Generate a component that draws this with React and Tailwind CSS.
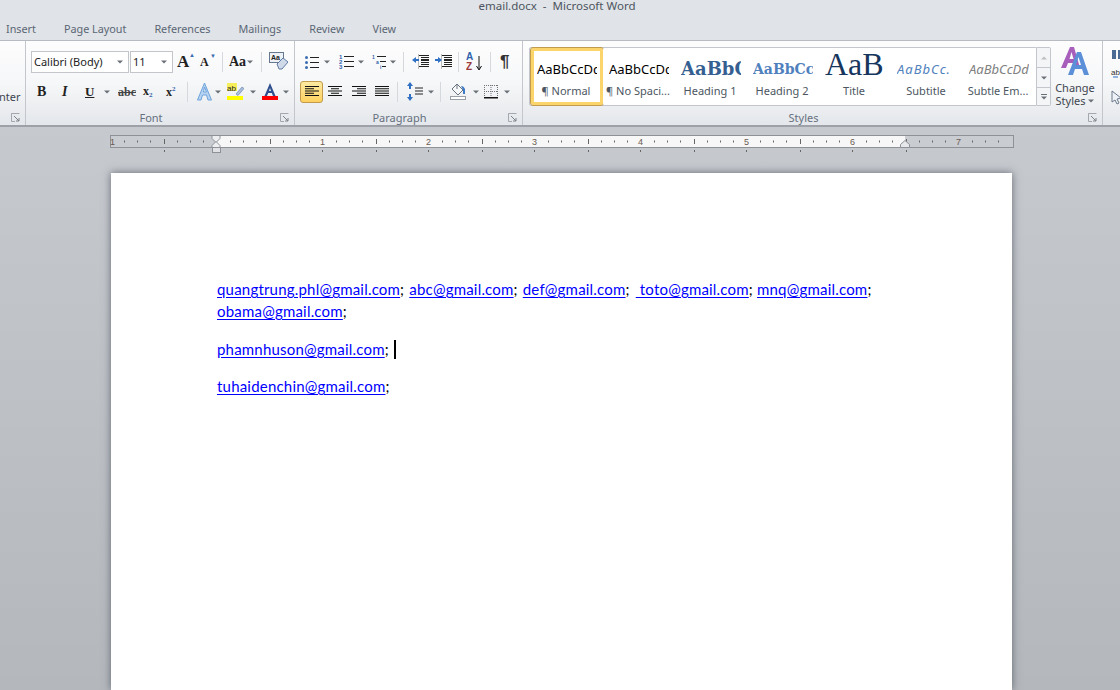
import React from "react";

const tabs = ["Insert", "Page Layout", "References", "Mailings", "Review", "View"];

const Caret = ({ className = "" }) => (
  <svg width="6" height="4" viewBox="0 0 6 4" className={`shrink-0 ${className}`}>
    <path d="M0 0.5h6L3 3.5z" fill="#6b7078" />
  </svg>
);

const Sep = ({ className = "" }) => <div className={`w-px h-[20px] bg-[#d5d8dc] shrink-0 ${className}`} />;

const Launcher = () => (
  <svg width="9" height="9" viewBox="0 0 9 9" className="absolute right-[5px] bottom-[3px]">
    <path d="M0.5 4V0.5H8.5M0.5 0.5V8.5H4" fill="none" stroke="#a3a8ae" />
    <path d="M3 3L8 8M8 5V8H5" fill="none" stroke="#7d8289" />
  </svg>
);

const Group = ({ label, width, children }) => (
  <div className={`relative h-full flex flex-col shrink-0 border-r border-[#c3c7cd] ${width}`}>
    <div className="h-[69px]">{children}</div>
    <div className="h-[15px] pr-[18px] text-center text-[11px] leading-[15px] text-[#66707e]">{label}</div>
    <Launcher />
  </div>
);

const Lines = ({ w = 14, rows = [[0, 14], [0, 9], [0, 14], [0, 9], [0, 14]] }) => (
  <svg width={w} height="11" viewBox={`0 0 ${w} 11`} className="shrink-0">
    {rows.map((r, i) => (
      <rect key={i} x={r[0]} y={i * 2.25} width={r[1]} height="1" fill="#111" />
    ))}
  </svg>
);

const Bullets = () => (
  <svg width="14" height="14" viewBox="0 0 14 14">
    {[1, 6, 11].map((y) => (
      <g key={y}>
        <rect x="0" y={y} width="3" height="3" rx="1.5" fill="#3a6cb0" />
        <rect x="5" y={y + 1} width="9" height="1" fill="#222" />
      </g>
    ))}
  </svg>
);

const Numbers = () => (
  <svg width="15" height="15" viewBox="0 0 15 15">
    {[0, 1, 2].map((i) => (
      <g key={i}>
        <text x="0" y={5 + i * 5} fontSize="6" fontWeight="700" fill="#2f62ad" fontFamily="Liberation Sans">{i + 1}</text>
        <rect x="5" y={2 + i * 5} width="10" height="1" fill="#222" />
      </g>
    ))}
  </svg>
);

const Multi = () => (
  <svg width="14" height="16" viewBox="0 0 14 16">
    <text x="0" y="5" fontSize="5" fontWeight="700" fill="#2f62ad" fontFamily="Liberation Sans">1</text>
    <rect x="5" y="2" width="9" height="1" fill="#222" />
    <text x="4" y="10" fontSize="5" fontWeight="700" fill="#2f62ad" fontFamily="Liberation Sans">a</text>
    <rect x="8" y="7" width="6" height="1" fill="#222" />
    <text x="8" y="15" fontSize="5" fontWeight="700" fill="#2f62ad" fontFamily="Liberation Sans">i</text>
    <rect x="10" y="12" width="4" height="1" fill="#222" />
  </svg>
);

const Indent = ({ flip }) => (
  <svg width="17" height="15" viewBox="0 0 17 15">
    <rect x="6" y="1" width="11" height="1" fill="#222" />
    <rect x="9" y="3" width="8" height="1" fill="#222" />
    <rect x="9" y="5" width="8" height="2" fill="#222" />
    <rect x="9" y="8" width="8" height="1" fill="#222" />
    <rect x="9" y="10" width="8" height="1" fill="#222" />
    <rect x="6" y="12" width="11" height="1" fill="#222" />
    <rect x="6" y="0" width="1" height="15" fill="#bbb" />
    {flip ? (
      <path d="M0 5h3V3l4 3-4 3V7H0z" fill="#2f6fc4" />
    ) : (
      <path d="M7 5H4V3L0 6l4 3V7h3z" fill="#2f6fc4" />
    )}
  </svg>
);

const Sort = () => (
  <svg width="17" height="21" viewBox="0 0 17 21">
    <text x="0" y="9" fontSize="10" fontWeight="700" fill="#2f62ad" fontFamily="Liberation Sans">A</text>
    <text x="0" y="19" fontSize="10" fontWeight="700" fill="#9c3b3b" fontFamily="Liberation Sans">Z</text>
    <path d="M13 5v13M10.5 15l2.5 4 2.5-4" fill="none" stroke="#111" />
  </svg>
);

const Shading = () => (
  <svg width="17" height="17" viewBox="0 0 17 17">
    <path d="M7 1l6 6-5 5-6-6z" fill="#f7f8fa" stroke="#6a7380" />
    <path d="M7 1v5" stroke="#6a7380" />
    <path d="M11 3c2 0 3 1 4 3v5h-2V7z" fill="#3f7cc6" />
    <rect x="0.5" y="13.5" width="15" height="3" fill="#fff" stroke="#9aa0a8" />
  </svg>
);

const BordersIcon = () => (
  <svg width="14" height="15" viewBox="0 0 14 15">
    <path d="M0.5 1v12M7 1v12M13.5 1v12M0 1.5h14M0 7.5h14" fill="none" stroke="#6f747b" strokeDasharray="1 1" />
    <rect x="0" y="13" width="14" height="1.5" fill="#111" />
  </svg>
);

const LineSpacing = () => (
  <svg width="16" height="19" viewBox="0 0 16 19">
    <path d="M3 0l3 4H4v3H2V4H0zM3 19l3-4H4v-3H2v3H0z" fill="#2f6fc4" />
    <path d="M8 6h8M8 9h8M8 12h8" stroke="#222" />
  </svg>
);

const ClearIcon = () => (
  <svg width="19" height="19" viewBox="0 0 19 19">
    <rect x="0.5" y="0.5" width="14" height="10" fill="#eef2f7" stroke="#66788f" />
    <text x="2" y="8" fontSize="7" fontWeight="700" fill="#222" fontFamily="Liberation Sans">Aa</text>
    <path d="M8 12l6-6 5 4-6 7H10z" fill="#cfd9e8" stroke="#5f7ba3" />
  </svg>
);

const GlowA = () => (
  <svg width="17" height="19" viewBox="0 0 17 19">
    <path d="M8.5 1L15.5 18H12L10.5 13H6.5L5 18H1.5zM7.5 10h3L8.5 5z" fill="#b6d4f2" stroke="#6ea4dc" strokeWidth="1" />
  </svg>
);

const Highlight = () => (
  <svg width="17" height="17" viewBox="0 0 17 17">
    <rect x="0" y="0" width="10" height="8" fill="#f6ee5a" />
    <text x="0" y="8" fontSize="8" fill="#222" fontFamily="Liberation Sans">ab</text>
    <path d="M9 11l6-7 2 1.5-6 7z" fill="#a9bfdc" stroke="#5f7ba3" strokeWidth="0.6" />
    <rect x="0" y="13" width="16" height="4" fill="#ffff00" />
  </svg>
);

const FontColor = () => (
  <svg width="16" height="17" viewBox="0 0 16 17">
    <path d="M8 0L13.5 13H11L9.8 10H6.2L5 13H2.5zM7 8h2L8 5z" fill="#2f4f8f" />
    <rect x="0" y="13" width="16" height="4" fill="#ff0000" />
  </svg>
);

const SmallBtn = ({ className = "", children }) => (
  <div className={`flex items-center shrink-0 ${className}`}>{children}</div>
);

const sampleBase = "h-[32px] pt-[4px] w-[60px] overflow-hidden whitespace-nowrap flex items-center leading-none";

const styles = [
  { name: "¶ Normal", text: "AaBbCcDd", cls: "font-['Noto_Sans'] text-[13px] text-black" },
  { name: "¶ No Spaci...", text: "AaBbCcDd", cls: "font-['Noto_Sans'] text-[13px] text-black" },
  { name: "Heading 1", text: "AaBbCc", cls: "font-['DejaVu_Serif'] font-bold text-[18px] text-[#365f91]" },
  { name: "Heading 2", text: "AaBbCc", cls: "font-['DejaVu_Serif'] font-bold text-[14px] text-[#4f81bd]" },
  { name: "Title", text: "AaB", cls: "font-['Liberation_Serif'] text-[32px] pb-[10px] text-[#17365d]" },
  { name: "Subtitle", text: "AaBbCc.", cls: "font-['Noto_Sans'] italic text-[13px] tracking-[1px] text-[#4f81bd]" },
  { name: "Subtle Em...", text: "AaBbCcDd", cls: "font-['Noto_Sans'] italic text-[13px] text-[#808080]" },
];

const StyleItem = ({ s, active }) => (
  <div
    className={`w-[72px] h-[57px] shrink-0 flex flex-col items-center rounded-[2px] ${
      active ? "border-[3px] border-[#fbd56c] outline outline-1 outline-[#c29b4c] bg-white" : "border-[3px] border-white"
    }`}
  >
    <div className={`${sampleBase} ${s.cls}`}>{s.text}</div>
    <div className="pr-[2px] text-[11px] leading-[16px] text-[#4c5662] whitespace-nowrap">{s.name}</div>
  </div>
);

const Ruler = () => {
  const ticks = [];
  for (let i = -8; i <= 60; i++) {
    const x = 216.5 + i * 13.25 - 110;
    if (x < 4 || x > 900) continue;
    const m = ((i % 8) + 8) % 8;
    if (m === 0) continue;
    ticks.push(<rect key={i} x={Math.round(x)} y={m === 4 ? 4 : 5.5} width="1" height={m === 4 ? 5 : 2} fill="#666" />);
    if (m === 4) ticks.push(<rect key={"b" + i} x={Math.round(x)} y="15" width="1" height="2" fill="#666" />);
  }
  return (
    <svg width="905" height="20" viewBox="0 0 905 20" className="block">
      <rect x="0.5" y="0.5" width="903" height="12" fill="#c9ccd1" stroke="#8e9298" />
      <rect x="106" y="1" width="689" height="11" fill="#f7f7f7" />
      {ticks}
      {[1, 2, 3, 4, 5, 6, 7].map((n) => (
        <g key={n}>
          <text x={106.5 + n * 106} y="10" textAnchor="middle" fontSize="9" fill="#6a5a50" fontFamily="Liberation Sans">{n}</text>
          {n < 7 && <rect x={106 + n * 106} y="15" width="1" height="2" fill="#666" />}
        </g>
      ))}
      <text x="0" y="10" fontSize="9" fill="#6a5a50" fontFamily="Liberation Sans">1</text>
      <path d="M102 0.5h8v3l-4 4-4-4z" fill="#eceef0" stroke="#8e9298" />
      <path d="M102 12.5v-2l4-4 4 4v2z" fill="#eceef0" stroke="#8e9298" />
      <rect x="102.5" y="12.5" width="8" height="5" fill="#dfe1e4" stroke="#8e9298" />
      <path d="M790.5 12.5v-3l4.5-4 4.5 4v3z" fill="#e6e8eb" stroke="#8e9298" />
    </svg>
  );
};

const Mail = ({ className = "", children }) => (
  <a className={`text-[#0000ff] underline decoration-[#0000ff] underline-offset-[2px] ${className}`}>{children}</a>
);

export default function App() {
  return (
    <div className="w-[1120px] h-[690px] overflow-hidden flex flex-col font-['Noto_Sans'] bg-gradient-to-b from-[#cacdd2] to-[#b4b8bd]">
      {/* title bar + tabs */}
      <div className="h-[41px] shrink-0 flex flex-col bg-[#e0e3e7] border-b border-[#b8bcc2]">
        <div className="h-[22px] -mt-[2px] pr-[6px] text-center text-[11.5px] leading-[16px] text-[#4d5560] whitespace-pre">email.docx  -  Microsoft Word</div>
        <div className="flex gap-[28px] pl-[6px] pt-[1px] text-[10.8px] leading-[16px] text-[#5a6675]">
          {tabs.map((t) => (
            <span key={t}>{t}</span>
          ))}
        </div>
      </div>

      {/* ribbon */}
      <div className="h-[86px] shrink-0 flex bg-gradient-to-b from-[#fdfdfe] via-[#f6f7f8] to-[#e4e7eb] border-b-2 border-[#9ea2a8]">
        <Group width="w-[26px]" label="">
          <div className="h-full pt-[48px] text-[11px] leading-[16px] text-[#3f4650] overflow-hidden whitespace-nowrap -ml-px">nter</div>
        </Group>

        <Group width="w-[269px]" label="Font">
          <div className="pl-[5px] pt-[10px] flex items-center h-[31px]">
            <div className="w-[98px] h-[22px] border border-[#c2c6cb] bg-white flex items-center justify-between pl-[2px] pr-[5px] pt-px text-[11px] text-[#222]">
              Calibri (Body) <Caret />
            </div>
            <div className="w-[43px] h-[22px] ml-px border border-[#c2c6cb] bg-white flex items-center justify-between pl-[2px] pr-[5px] pt-px text-[11px] text-[#222]">
              11 <Caret />
            </div>
            <div className="ml-[4px] w-[18px] text-[17px] font-bold font-['Liberation_Serif'] text-[#222] relative leading-none">A<span className="absolute -top-[1px] right-0 text-[6px] text-[#3a6cb0]">▲</span></div>
            <div className="ml-[5px] w-[16px] text-[12px] font-bold font-['Liberation_Serif'] text-[#222] relative leading-none">A<span className="absolute -top-[3px] right-0 text-[6px] text-[#3a6cb0]">▼</span></div>
            <Sep className="ml-[6px]" />
            <div className="ml-[6px] w-[17px] text-[14px] font-bold font-['Liberation_Serif'] text-[#222] leading-none">Aa</div>
            <Caret className="ml-[1px]" />
            <Sep className="ml-[8px]" />
            <div className="ml-[7px]"><ClearIcon /></div>
          </div>
          <div className="pl-[11px] pt-[9px] flex items-center h-[30px] font-['Liberation_Serif'] text-[#222]">
            <div className="w-[12px] text-[14px] font-bold">B</div>
            <div className="ml-[12px] w-[11px] text-[14px] italic font-bold pl-px">I</div>
            <div className="ml-[13px] w-[12px] text-[13px] font-bold underline">U</div>
            <Caret className="ml-[7px]" />
            <div className="ml-[8px] w-[18px] text-[12px] font-bold line-through text-[#444]">abc</div>
            <div className="ml-[7px] w-[15px] text-[12px] font-bold">x<span className="text-[7px] text-[#2f62ad] align-[-2px]">2</span></div>
            <div className="ml-[8px] w-[15px] text-[12px] font-bold">x<span className="text-[7px] text-[#2f62ad] align-[5px]">2</span></div>
            <Sep className="ml-[6px]" />
            <div className="ml-[8px]"><GlowA /></div>
            <Caret className="ml-[2px]" />
            <div className="ml-[6px]"><Highlight /></div>
            <Caret className="ml-[6px]" />
            <div className="ml-[6px]"><FontColor /></div>
            <Caret className="ml-[5px]" />
          </div>
        </Group>

        <Group width="w-[228px]" label="Paragraph">
          <div className="pl-[10px] pt-[10px] flex items-center h-[31px]">
            <Bullets /><Caret className="ml-[5px]" />
            <div className="ml-[9px]"><Numbers /></div><Caret className="ml-[4px]" />
            <div className="ml-[8px]"><Multi /></div><Caret className="ml-[4px]" />
            <Sep className="ml-[7px]" />
            <div className="ml-[8px]"><Indent /></div>
            <div className="ml-[6px]"><Indent flip /></div>
            <Sep className="ml-[6px]" />
            <div className="ml-[7px]"><Sort /></div>
            <Sep className="ml-[7px]" />
            <div className="ml-[9px] w-[14px] text-[17px] font-bold font-['Liberation_Sans'] text-[#333] leading-none">¶</div>
          </div>
          <div className="pl-[5px] pt-[8px] flex items-center h-[31px]">
            <div className="w-[23px] h-[22px] rounded-[3px] border border-[#c29b4c] bg-gradient-to-b from-[#fde9a0] to-[#fdd15f] flex items-center justify-center">
              <Lines rows={[[0, 14], [0, 9], [0, 14], [0, 9], [0, 14]]} />
            </div>
            <SmallBtn className="ml-[5px]"><Lines rows={[[0, 14], [3, 8], [0, 14], [3, 8], [0, 14]]} /></SmallBtn>
            <SmallBtn className="ml-[10px]"><Lines rows={[[0, 14], [5, 9], [0, 14], [5, 9], [0, 14]]} /></SmallBtn>
            <SmallBtn className="ml-[9px]"><Lines rows={[[0, 14], [0, 14], [0, 14], [0, 14], [0, 14]]} /></SmallBtn>
            <Sep className="ml-[8px]" />
            <div className="ml-[9px]"><LineSpacing /></div><Caret className="ml-[5px]" />
            <Sep className="ml-[6px]" />
            <div className="ml-[9px]"><Shading /></div><Caret className="ml-[6px]" />
            <div className="ml-[5px]"><BordersIcon /></div><Caret className="ml-[6px]" />
          </div>
        </Group>

        <Group width="w-[580px]" label="Styles">
          <div className="pl-[6px] pt-[6px] flex items-start">
            <div className="flex w-[508px] h-[59px] bg-white border border-[#c3c7cd] rounded-l-[2px] pl-px">
              {styles.map((s, i) => (
                <StyleItem key={s.name} s={s} active={i === 0} />
              ))}
            </div>
            <div className="w-[14px] h-[59px] flex flex-col border border-l-0 border-[#c3c7cd] rounded-r-[2px] bg-[#f4f5f7]">
              <div className="h-[20px] flex items-center justify-center border-b border-[#c3c7cd]"><Caret className="rotate-180 opacity-40" /></div>
              <div className="h-[20px] flex items-center justify-center border-b border-[#c3c7cd]"><Caret /></div>
              <div className="flex-1 flex flex-col gap-px items-center justify-center"><div className="w-[6px] h-px bg-[#6b7078]" /><Caret /></div>
            </div>
            <div className="w-[50px] pr-[2px] flex flex-col items-center text-[11px] leading-[13px] text-[#3f4650]">
              <svg width="32" height="30" viewBox="0 0 32 30" className="mt-[-1px] mb-[5px]">
                <path d="M11 1h4l6 21h-4l-1-5H9l-2 5H2z M10.5 13h4L12.5 6z" fill="#a85fbc" />
                <path d="M18 6h4l8 23h-5l-2-6h-7l-2 6H9z M17 19h5l-2.5-8z" fill="#5b8fd8" />
              </svg>
              <span>Change</span>
              <span className="flex items-center gap-[3px]">Styles <Caret /></span>
            </div>
          </div>
        </Group>

        <div className="w-[17px] ml-[7px] pt-[6px] flex flex-col gap-[5px] overflow-hidden shrink-0">
          <svg width="17" height="60" viewBox="0 0 17 60">
            <path d="M2 3h4v9H2zM8 3h4v9H8z" fill="#4b6a94" />
            <text x="1" y="28" fontSize="8" fill="#333" fontFamily="Liberation Sans">ab</text>
            <path d="M3 30h5" stroke="#2f6fc4" />
            <path d="M2 44l9 7-4 1 2 4-2 1-2-4-3 2z" fill="#eef2f7" stroke="#6c7a8d" />
          </svg>
        </div>
      </div>

      {/* ruler */}
      <div className="h-[46px] shrink-0 pl-[110px] pt-[8px]">
        <Ruler />
      </div>

      {/* page */}
      <div className="ml-[111px] w-[901px] flex-1 bg-white shadow-[0_0_8px_rgba(70,75,85,0.75)] pl-[106px] pt-[105px] font-['Lato'] text-[15px] tracking-[0.2px] leading-[22px] text-black">
        <p className="whitespace-nowrap">
          <Mail>quangtrung.phl@gmail.com</Mail>; <Mail className="ml-px">abc@gmail.com</Mail>; <Mail className="ml-px">def@gmail.com</Mail>; <Mail className="ml-[2px]">&nbsp;toto@gmail.com</Mail>; <Mail>mnq@gmail.com</Mail>;
        </p>
        <p><Mail>obama@gmail.com</Mail>;</p>
        <p className="mt-[16px] flex items-center whitespace-pre">
          <Mail>phamnhuson@gmail.com</Mail>;
          <span className="ml-[5px] w-[2px] h-[19px] bg-black" />
        </p>
        <p className="mt-[15px]"><Mail>tuhaidenchin@gmail.com</Mail>;</p>
      </div>
    </div>
  );
}
